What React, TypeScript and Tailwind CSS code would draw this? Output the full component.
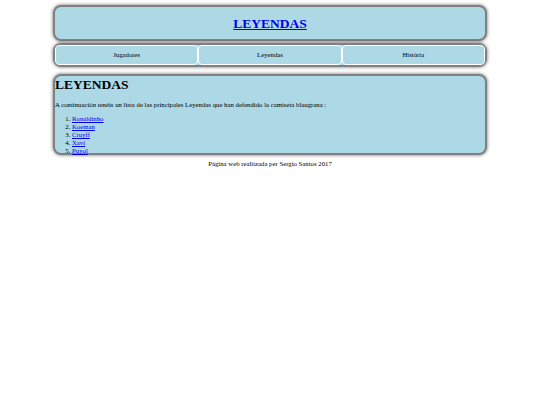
import React from "react";

const box =
  "w-[434px] mx-auto bg-[#add8e6] border-2 border-[#808080] rounded-[8px] shadow-[0_0_3px_1px_rgba(0,0,0,0.35)]";
const serif = "font-['Liberation_Serif','Times_New_Roman',serif]";

export default function App() {
  const items = ["Jugadores", "Leyendas", "História"];
  const legends = ["Ronaldinho", "Koeman", "Cruyff", "Xavi", "Puyol"];
  return (
    <div className={`min-h-[405px] bg-white text-black pt-[5px] ${serif}`}>
      <div className={`${box} h-[36px] flex items-center justify-center`}>
        <a href="#" className={`text-[13.5px] font-bold text-[#0000ee] underline leading-[15px] mt-[1px] ${serif}`}>
          LEYENDAS
        </a>
      </div>
      <div className={`${box} mt-[2px] h-[24px] flex`}>
        {items.map((it) => (
          <div
            key={it}
            className="flex-1 border border-white rounded-[4px] flex items-center justify-center text-[6.75px] leading-[8px]"
          >
            {it}
          </div>
        ))}
      </div>
      <div className={`${box} mt-[7px] h-[81px]`}>
        <h1 className={`text-[13.5px] font-bold leading-[15px] mt-[1px] ${serif}`}>LEYENDAS</h1>
        <p className="text-[6.75px] leading-[8px] mt-[9px]">
          A continuación tenéis un lista de las principales Leyendas que han defendido la camiseta blaugrana :
        </p>
        <ol className="list-decimal pl-[17px] mt-[6px] text-[6.75px] leading-[8px]">
          {legends.map((l) => (
            <li key={l}>
              <a href="#" className="text-[#0000ee] underline">
                {l}
              </a>
            </li>
          ))}
        </ol>
      </div>
      <p className="text-center text-[6.75px] leading-[8px] mt-[5px]">
        Página web realitzada per Sergio Santos 2017
      </p>
    </div>
  );
}
